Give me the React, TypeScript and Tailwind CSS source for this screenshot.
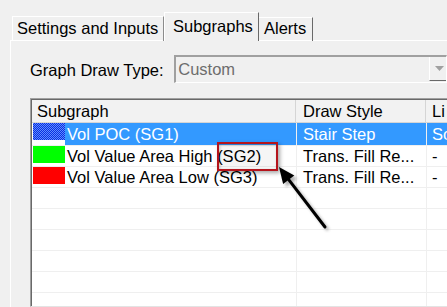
import React from "react";

type Row = {
  swatch: "blue" | "green" | "red";
  name: string;
  style: string;
  c3: string;
  selected?: boolean;
};

const rows: Row[] = [
  { swatch: "blue", name: "Vol POC (SG1)", style: "Stair Step", c3: "So", selected: true },
  { swatch: "green", name: "Vol Value Area High (SG2)", style: "Trans. Fill Re...", c3: "-" },
  { swatch: "red", name: "Vol Value Area Low (SG3)", style: "Trans. Fill Re...", c3: "-" },
];

const swatchClass: Record<Row["swatch"], string> = {
  blue: "bg-[image:repeating-conic-gradient(#0a2fe0_0%_25%,#5f8cff_0%_50%)] bg-[length:2px_2px]",
  green: "bg-[#00ff00]",
  red: "bg-[#ff0000]",
};

function DataRow({ row, first }: { row: Row; first: boolean }) {
  const sel = row.selected;
  return (
    <div
      className={
        (first ? "h-[23px] leading-[22px]" : "h-[21px] leading-[20px]") +
        " flex border-b border-[#efefef] whitespace-nowrap"
      }
    >
      <div className="flex w-[265px] border-r border-[#efefef]">
        <div className={"ml-[1px] w-[32px] h-[17px] shrink-0 " + swatchClass[row.swatch]} />
        <div className={"flex-1 pl-[2px] " + (sel ? "bg-[#3399ff] text-white" : "")}>{row.name}</div>
      </div>
      <div className={"w-[130px] border-r border-[#efefef] pl-[6px] overflow-hidden " + (sel ? "bg-[#3399ff] text-white" : "")}>
        {row.style}
      </div>
      <div className={"flex-1 pl-[5px] " + (sel ? "bg-[#3399ff] text-white" : "")}>{row.c3}</div>
    </div>
  );
}

function EmptyRow() {
  return (
    <div className="flex h-[21px] border-b border-[#efefef]">
      <div className="w-[265px] border-r border-[#efefef]" />
      <div className="w-[130px] border-r border-[#efefef]" />
      <div className="flex-1" />
    </div>
  );
}

export default function App() {
  return (
    <div className="relative w-[447px] h-[307px] overflow-hidden bg-[#f0f0f0] font-['Liberation_Sans',Arial,sans-serif] text-[16.5px] text-black">
      {/* Tabs */}
      <div className="flex items-end h-[41px] pl-[12px] whitespace-nowrap">
        <div className="w-[152px] h-[25px] border-t border-l border-r border-t-white border-l-white border-r-[#8c8c8c] pl-[4px] leading-[22px]">
          Settings and Inputs
        </div>
        <div className="relative z-10 w-[95px] h-[29px] bg-[#f0f0f0] border-t border-l border-r border-t-white border-l-white border-r-[#696969] pl-[8px] pt-[2px] leading-[22px]">
          Subgraphs
        </div>
        <div className="w-[54px] h-[24px] border-t border-r border-t-white border-r-[#696969] pl-[5px] leading-[20px]">
          Alerts
        </div>
      </div>

      {/* Panel */}
      <div className="-mt-px ml-[10px] border-t border-l border-white pl-[19px] pt-[14px]">
        <div className="flex h-[28px] whitespace-nowrap">
          <div className="w-[146px] leading-[30px]">Graph Draw Type:</div>
          <div className="flex w-[276px] h-[28px] border-t-2 border-l-2 border-b border-r border-t-[#a0a0a0] border-l-[#a0a0a0] border-b-white border-r-white">
            <div className="flex-1 pl-[2px] leading-[25px] text-[#6d6d6d]">Custom</div>
            <div className="w-[17px] h-[24px] border-l border-b border-l-white border-b-[#696969] flex items-center justify-center pl-[2px]">
              <svg width="9" height="5" viewBox="0 0 9 5">
                <polygon points="0,0 9,0 4.5,5" fill="#a0a0a0" />
              </svg>
            </div>
          </div>
        </div>

        {/* List view */}
        <div className="mt-[15px] w-[430px] h-[209px] border-t border-l border-b border-t-[#a0a0a0] border-l-[#a0a0a0] border-b-[#e3e3e3]">
          <div className="h-full overflow-hidden border-t border-l border-[#696969] bg-white">
            <div className="flex h-[23px] bg-[#f2f2f2] border-b border-[#d5d5d5] leading-[22px] whitespace-nowrap">
              <div className="w-[264px] border-r border-[#d5d5d5] pl-[5px]">Subgraph</div>
              <div className="w-[130px] border-r border-[#d5d5d5] pl-[7px]">Draw Style</div>
              <div className="flex-1 pl-[6px]">Li</div>
            </div>
            {rows.map((r, i) => (
              <DataRow key={r.name} row={r} first={i === 0} />
            ))}
            <EmptyRow />
            <EmptyRow />
            <EmptyRow />
            <EmptyRow />
            <EmptyRow />
            <EmptyRow />
          </div>
        </div>
      </div>

      {/* Annotation: red box */}
      <div className="absolute left-[217px] top-[142px] w-[61px] h-[29px] border-2 border-[#b5141c] bg-black/[0.04] shadow-[inset_1px_1px_3px_rgba(0,0,0,0.2),2px_2px_4px_rgba(0,0,0,0.35)]" />

      {/* Annotation: arrow */}
      <svg className="absolute left-0 top-0 pointer-events-none" width="447" height="307" viewBox="0 0 447 307">
        <defs>
          <filter id="sh" x="-20%" y="-20%" width="140%" height="140%">
            <feGaussianBlur stdDeviation="1.6" />
          </filter>
        </defs>
        <g transform="translate(3,3)" opacity="0.45" filter="url(#sh)">
          <line x1="325" y1="227" x2="288.7" y2="179.7" stroke="#555" strokeWidth="3" />
          <polygon points="279,167 294.3,175.4 283.1,184" fill="#555" />
        </g>
        <line x1="325" y1="227" x2="288.7" y2="179.7" stroke="#000" strokeWidth="3" strokeLinecap="round" />
        <polygon points="279,167 294.3,175.4 283.1,184" fill="#000" />
      </svg>
    </div>
  );
}
